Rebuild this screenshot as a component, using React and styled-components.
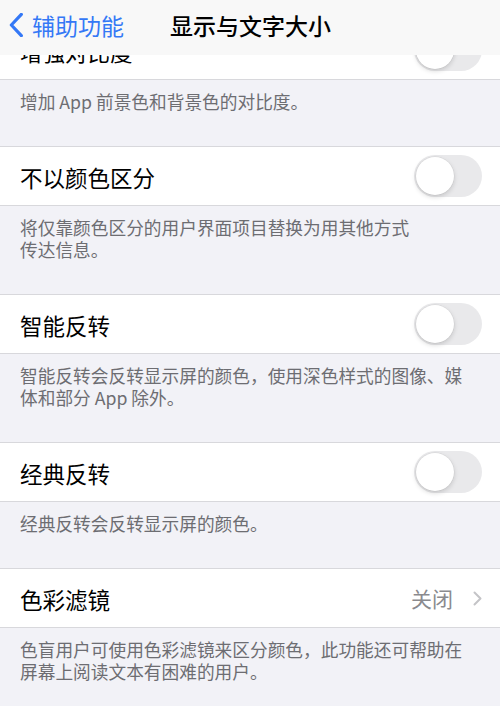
import React from 'react'
import styled, { createGlobalStyle } from 'styled-components'

const GlobalStyle = createGlobalStyle`
  html, body {
    margin: 0;
    padding: 0;
    background: #f2f2f7;
    font-family: "Noto Sans CJK SC", "Noto Sans", sans-serif;
  }
`

const Screen = styled.div`
  width: 500px;
  height: 706px;
  overflow: hidden;
  background: #f2f2f7;
  display: flex;
  flex-direction: column;
`

const NavBar = styled.div`
  height: 55px;
  flex-shrink: 0;
  background: #f8f8f8;
  display: flex;
  align-items: center;
  position: relative;
  z-index: 2;
`

const BackButton = styled.div`
  display: flex;
  align-items: center;
  gap: 9px;
  padding-left: 9px;
  color: #3478f6;
  font-size: 23px;
  width: 161px;
  padding-bottom: 5px;
`

const Title = styled.div`
  font-size: 23px;
  font-weight: 500;
  color: #000;
  padding-bottom: 5px;
`

const Scroller = styled.div`
  flex: 1;
  overflow: hidden;
`

const Content = styled.div`
  margin-top: -34px;
`

const Row = styled.div`
  height: 58px;
  background: #fff;
  display: flex;
  align-items: center;
  padding: 0 18px 0 20px;
  border-top: 1px solid #d8d8dc;
  border-bottom: 1px solid #d8d8dc;
  &:first-child {
    border-top: none;
  }
`

const Label = styled.div`
  flex: 1;
  font-size: 22.5px;
  color: #000;
  padding-top: 1px;
`

const Value = styled.div`
  font-size: 21px;
  color: #8a8a8e;
  margin-right: 20px;
`

const Toggle = styled.div`
  width: 68px;
  height: 42px;
  border-radius: 21px;
  background: #e9e9eb;
  box-sizing: border-box;
  position: relative;
  &:after {
    content: "";
    position: absolute;
    top: 2px;
    left: 2px;
    width: 38px;
    height: 38px;
    border-radius: 50%;
    background: #fff;
    box-shadow: 0 2px 5px rgba(0, 0, 0, 0.16), 0 0 0 0.5px rgba(0, 0, 0, 0.06);
  }
`

const Footer = styled.div`
  padding: 10px 20px 34px 20px;
  font-size: 17.7px;
  line-height: 22px;
  color: #6d6d72;
  white-space: nowrap;
`

const Chevron = ({ color, w, h, sw }) => (
  <svg width={w} height={h} viewBox="0 0 10 18" fill="none">
    <path d="M9 1L1.5 9L9 17" stroke={color} strokeWidth={sw} strokeLinecap="round" strokeLinejoin="round" />
  </svg>
)

const Disclosure = () => (
  <svg width="9" height="15" viewBox="0 0 9 15" fill="none">
    <path d="M1.5 1.5L7.5 7.5L1.5 13.5" stroke="#c4c4c7" strokeWidth="2" strokeLinecap="round" strokeLinejoin="round" />
  </svg>
)

const sections = [
  { label: '增强对比度', toggle: true, note: ['增加 App 前景色和背景色的对比度。'] },
  { label: '不以颜色区分', toggle: true, note: ['将仅靠颜色区分的用户界面项目替换为用其他方式', '传达信息。'] },
  { label: '智能反转', toggle: true, note: ['智能反转会反转显示屏的颜色，使用深色样式的图像、媒', '体和部分 App 除外。'] },
  { label: '经典反转', toggle: true, note: ['经典反转会反转显示屏的颜色。'] },
  { label: '色彩滤镜', value: '关闭', note: ['色盲用户可使用色彩滤镜来区分颜色，此功能还可帮助在', '屏幕上阅读文本有困难的用户。'] },
]

export default function App() {
  return (
    <Screen>
      <GlobalStyle />
      <NavBar>
        <BackButton>
          <Chevron color="#3478f6" w={14} h={24} sw={2.4} />
          辅助功能
        </BackButton>
        <Title>显示与文字大小</Title>
      </NavBar>
      <Scroller>
        <Content>
          {sections.map(s => (
            <React.Fragment key={s.label}>
              <Row>
                <Label>{s.label}</Label>
                {s.value && <Value>{s.value}</Value>}
                {s.toggle ? <Toggle /> : <Disclosure />}
              </Row>
              <Footer>
                {s.note.map((line, j) => (
                  <div key={j}>{line}</div>
                ))}
              </Footer>
            </React.Fragment>
          ))}
        </Content>
      </Scroller>
    </Screen>
  )
}
